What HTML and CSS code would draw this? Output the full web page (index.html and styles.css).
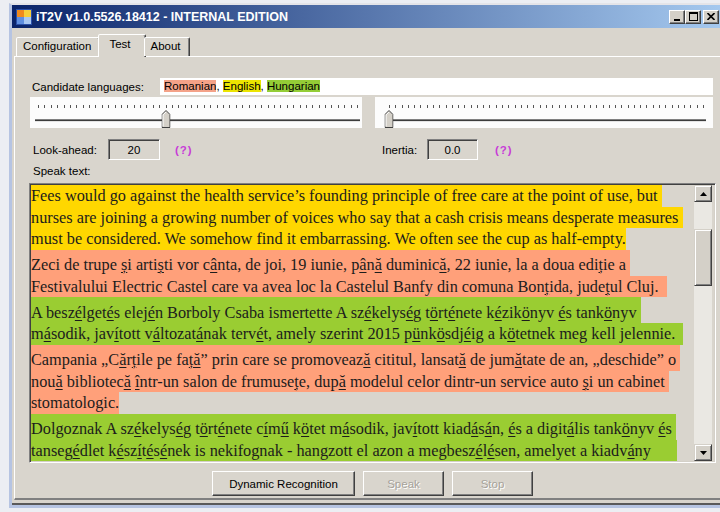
FILE: index.html
```html
<!DOCTYPE html>
<html lang="en">
<head>
<meta charset="utf-8">
<title>iT2V</title>
<link rel="stylesheet" href="styles.css">
</head>
<body>
<div class="window">
  <header class="titlebar">
    <svg class="app-icon" width="16" height="16" viewBox="0 0 16 16">
      <rect x="0" y="0" width="16" height="16" fill="#2a4fa8"/>
      <rect x="1" y="1" width="7" height="7" fill="#f08a1c"/>
      <rect x="8" y="1" width="7" height="7" fill="#f6cf3a"/>
      <rect x="1" y="8" width="7" height="7" fill="#5f8fe0"/>
      <rect x="8" y="8" width="7" height="7" fill="#a9c8f2"/>
    </svg>
    <span class="title">iT2V v1.0.5526.18412 - INTERNAL EDITION</span>
    <div class="caption-buttons">
      <span class="cbtn"><svg width="8" height="8" viewBox="0 0 8 8"><rect x="1" y="6" width="6" height="2" fill="#000"/></svg></span>
      <span class="cbtn"><svg width="9" height="9" viewBox="0 0 9 9"><rect x="0.5" y="0.5" width="8" height="8" fill="none" stroke="#000"/><rect x="0" y="0" width="9" height="2" fill="#000"/></svg></span>
      <span class="cbtn close"><svg width="8" height="7" viewBox="0 0 8 7"><path d="M0.5 0 L7.5 7 M7.5 0 L0.5 7" stroke="#000" stroke-width="1.6"/></svg></span>
    </div>
  </header>

  <div class="client">
    <nav class="tabs">
      <div class="tab">Configuration</div>
      <div class="tab active">Test</div>
      <div class="tab">About</div>
    </nav>

    <section class="panel">
      <div class="langs">
        <span class="lbl">Candidate languages:</span>
        <div class="lang-field"><span class="hl-ro">Romanian</span>, <span class="hl-en">English</span>, <span class="hl-hu">Hungarian</span></div>
      </div>

      <div class="sliders">
        <div class="trackbar look">
          <div class="scale">
            <div class="ticks"></div>
            <div class="channel"></div>
            <svg class="thumb" style="left: 40%" width="9" height="18" viewBox="0 0 9 18">
              <path d="M0.5 17.5 V4.5 L4.5 0.5 L8.5 4.5 V17.5 Z" fill="#d4d0c8" stroke="#404040"/>
              <path d="M1.5 16.5 V4.9 L4.5 1.9" fill="none" stroke="#fff"/>
            </svg>
          </div>
        </div>
        <div class="trackbar inert">
          <div class="scale">
            <div class="ticks"></div>
            <div class="channel"></div>
            <svg class="thumb" style="left: 0%" width="9" height="18" viewBox="0 0 9 18">
              <path d="M0.5 17.5 V4.5 L4.5 0.5 L8.5 4.5 V17.5 Z" fill="#d4d0c8" stroke="#404040"/>
              <path d="M1.5 16.5 V4.9 L4.5 1.9" fill="none" stroke="#fff"/>
            </svg>
          </div>
        </div>
      </div>

      <div class="params">
        <div class="param look">
          <span class="plabel">Look-ahead:</span>
          <span class="numbox">20</span>
          <span class="help">(?)</span>
        </div>
        <div class="param inert">
          <span class="plabel">Inertia:</span>
          <span class="numbox">0.0</span>
          <span class="help">(?)</span>
        </div>
      </div>

      <div class="speak-lbl">Speak text:</div>

      <div class="textbox">
        <div class="doc">
          <p class="para en">
            <span class="ln">Fees would go against the health service’s founding principle of free care at the point of use, but </span>
            <span class="ln">nurses are joining a growing number of voices who say that a cash crisis means desperate measures </span>
            <span class="ln">must be considered. We somehow find it embarrassing. We often see the cup as half-empty.</span>
          </p>
          <p class="para ro">
            <span class="ln">Zeci de trupe <u>ș</u>i arti<u>ș</u>ti vor c<u>â</u>nta, de joi, 19 iunie, p<u>â</u>n<u>ă</u> duminic<u>ă</u>, 22 iunie, la a doua edi<u>ț</u>ie a </span>
            <span class="ln tail">Festivalului Electric Castel care va avea loc la Castelul Banfy din comuna Bon<u>ț</u>ida, jude<u>ț</u>ul Cluj.</span>
          </p>
          <p class="para hu">
            <span class="ln">A besz<u>é</u>lget<u>é</u>s elej<u>é</u>n Borboly Csaba ismertette A sz<u>é</u>kelys<u>é</u>g t<u>ö</u>rt<u>é</u>nete k<u>é</u>zik<u>ö</u>nyv <u>é</u>s tank<u>ö</u>nyv </span>
            <span class="ln tail">m<u>á</u>sodik, jav<u>í</u>tott v<u>á</u>ltozat<u>á</u>nak terv<u>é</u>t, amely szerint 2015 p<u>ü</u>nk<u>ö</u>sdj<u>é</u>ig a k<u>ö</u>tetnek meg kell jelennie.</span>
          </p>
          <p class="para ro">
            <span class="ln">Campania „C<u>ă</u>r<u>ț</u>ile pe fa<u>ță</u>” prin care se promoveaz<u>ă</u> cititul, lansat<u>ă</u> de jum<u>ă</u>tate de an, „deschide” o </span>
            <span class="ln">nou<u>ă</u> bibliotec<u>ă</u> <u>î</u>ntr-un salon de frumuse<u>ț</u>e, dup<u>ă</u> modelul celor dintr-un service auto <u>ș</u>i un cabinet </span>
            <span class="ln">stomatologic.</span>
          </p>
          <p class="para hu">
            <span class="ln">Dolgoznak A sz<u>é</u>kelys<u>é</u>g t<u>ö</u>rt<u>é</u>nete c<u>í</u>m<u>ű</u> k<u>ö</u>tet m<u>á</u>sodik, jav<u>í</u>tott kiad<u>á</u>s<u>á</u>n, <u>é</u>s a digit<u>á</u>lis tank<u>ö</u>nyv <u>é</u>s </span>
            <span class="ln tail-wide">tanseg<u>é</u>dlet k<u>é</u>sz<u>í</u>t<u>é</u>s<u>é</u>nek is nekifognak - hangzott el azon a megbesz<u>é</u>l<u>é</u>sen, amelyet a kiadv<u>á</u>ny </span>
          </p>
        </div>
        <div class="vscroll">
          <div class="sb-btn"><svg width="7" height="4" viewBox="0 0 7 4"><path d="M0 4 L3.5 0 L7 4 Z" fill="#000"/></svg></div>
          <div class="sb-track"><div class="sb-thumb"></div></div>
          <div class="sb-btn"><svg width="7" height="4" viewBox="0 0 7 4"><path d="M0 0 L3.5 4 L7 0 Z" fill="#000"/></svg></div>
        </div>
      </div>

      <div class="actions">
        <button class="btn wide" type="button">Dynamic Recognition</button>
        <button class="btn" type="button" disabled>Speak</button>
        <button class="btn" type="button" disabled>Stop</button>
      </div>
    </section>
  </div>
</div>
</body>
</html>
```

FILE: styles.css
```css
* { box-sizing: border-box; }

html, body { margin: 0; padding: 0; }

body {
  width: 720px;
  height: 512px;
  overflow: hidden;
  background: #eceef3;
  font-family: "Liberation Sans", Arial, sans-serif;
  font-size: 11.5px;
  color: #000;
}

/* ---------- window frame ---------- */
.window {
  margin: 3px 0 0 9px;
  width: 718px;
  border-top: 2px solid #e4e4e8;
  border-left: 3px solid #b6c4e2;
  border-bottom: 3px solid #b6c4e2;
  background: #d9d5cd;
}

.titlebar {
  height: 23px;
  display: flex;
  align-items: center;
  background: linear-gradient(to right, #0a246a, #a6caf0);
  color: #fff;
}

.app-icon { flex: none; margin-left: 4px; }

.title {
  margin-left: 4px;
  font-weight: bold;
  font-size: 12.5px;
  white-space: nowrap;
}

.caption-buttons {
  margin-left: auto;
  margin-right: 8px;
  display: flex;
}

.cbtn {
  width: 16px;
  height: 14px;
  display: flex;
  align-items: center;
  justify-content: center;
  background: #d4d0c8;
  border: 1px solid;
  border-color: #fff #404040 #404040 #fff;
  box-shadow: inset -1px -1px #808080;
}

.cbtn.close { margin-left: 2px; }

/* ---------- client area ---------- */
.client {
  padding: 6px 0 3px 2px;
  border-bottom: 2px solid #5a5a5a;
}

.tabs {
  position: relative;
  z-index: 1;
  display: flex;
  align-items: flex-end;
  height: 22px;
  padding-left: 2px;
}

.tab {
  height: 19px;
  padding: 0 8px 0 6px;
  line-height: 17px;
  border: 1px solid;
  border-bottom: none;
  border-color: #fff #404040 transparent #fff;
  box-shadow: inset -1px 0 #808080;
  border-radius: 2px 2px 0 0;
  background: #d9d5cd;
  white-space: nowrap;
}

.tab.active {
  height: 23px;
  margin: 0 -2px -1px;
  padding: 0 14px 0 10px;
  line-height: 19px;
}

.panel {
  width: 713px;
  border-top: 1px solid #fff;
  border-left: 1px solid #fff;
  border-right: 1px solid #404040;
  border-bottom: 2px solid #808080;
  padding: 21px 10px 2px 14px;
}

/* candidate languages */
.langs {
  display: flex;
  align-items: center;
  height: 17px;
}

.lbl {
  flex: none;
  width: 128px;
  margin-left: 3px;
}

.lang-field {
  flex: 1;
  height: 17px;
  margin-right: 3px;
  padding-left: 4px;
  line-height: 17px;
  background: #fff;
  white-space: nowrap;
}

.hl-ro { background: #f4a288; }
.hl-en { background: #ece400; }
.hl-hu { background: #94cd36; }

/* trackbars */
.sliders {
  display: flex;
  gap: 13px;
  height: 31px;
  margin-top: 2px;
  padding-left: 1px;
}

.trackbar {
  display: flex;
  height: 31px;
  background: #fcfcfc;
}

.trackbar.look { width: 332px; }
.trackbar.inert { width: 338px; }

.scale {
  position: relative;
  flex: 1;
  display: flex;
  flex-direction: column;
}

.trackbar.look .scale { margin: 0 5px 0 8px; --step: 6.38px; }
.trackbar.inert .scale { margin: 0 10px 0 14px; --step: 6.28px; }

.ticks {
  height: 3px;
  margin-top: 8px;
  margin-right: -1px;
  background: repeating-linear-gradient(to right, #555 0 1px, transparent 1px var(--step));
}

.channel {
  height: 3px;
  margin: 11px -3px 0;
  border-top: 1px solid #808080;
  border-bottom: 1px solid #e4e4e4;
  background: #3c3c3c;
}

.thumb {
  position: absolute;
  top: 13px;
  transform: translateX(-50%);
}

/* numeric parameters */
.params {
  display: flex;
  height: 21px;
  margin-top: 11px;
}

.param {
  display: flex;
  align-items: center;
}

.param.look { width: 346px; padding-left: 4px; }
.param.inert { padding-left: 7px; }

.plabel { flex: none; }
.param.look .plabel { width: 75px; }
.param.inert .plabel { width: 45px; }

.numbox {
  height: 21px;
  display: flex;
  align-items: center;
  justify-content: center;
  border: 1px solid;
  border-color: #808080 #fff #fff #808080;
  box-shadow: inset 1px 1px #404040;
  background: #d9d5cd;
}

.param.look .numbox { width: 52px; }
.param.inert .numbox { width: 51px; }

.help {
  color: #c83cd8;
  font-weight: bold;
  letter-spacing: 1px;
}

.param.look .help { margin-left: 15px; }
.param.inert .help { margin-left: 17px; }

.speak-lbl {
  margin: 4px 0 0 4px;
  line-height: 14px;
}

/* speak text box */
.textbox {
  display: flex;
  height: 280px;
  margin-top: 5px;
  padding: 1px;
  border: 1px solid;
  border-color: #808080 #fff #fff #808080;
  box-shadow: inset 1px 1px #404040, inset -1px -1px #d4d0c8;
  background: #d9d5cd;
}

.doc {
  flex: 1;
  overflow: hidden;
  font-family: "Liberation Serif", "Times New Roman", serif;
  font-size: 16.3px;
  line-height: 21.5px;
  color: #1c1c1c;
}

.para { margin: 0; }

.ln {
  display: block;
  width: fit-content;
  white-space: pre;
}

.ln.tail { padding-right: 8px; }
.ln.tail-wide { padding-right: 22px; }

.para + .para .ln:first-child { padding-top: 4.5px; }

.para.en .ln { background: #ffd700; }
.para.ro .ln { background: #ffa07a; }
.para.hu .ln { background: #9acd32; }

u {
  text-decoration: underline;
  text-decoration-thickness: 1px;
  text-underline-offset: 2px;
}

.vscroll {
  flex: none;
  width: 18px;
  margin-right: 2px;
  display: flex;
  flex-direction: column;
  background: #eae8e3;
}

.sb-btn,
.sb-thumb {
  background: #d4d0c8;
  border: 1px solid;
  border-color: #d4d0c8 #404040 #404040 #d4d0c8;
  box-shadow: inset 1px 1px #fff, inset -1px -1px #808080;
}

.sb-btn {
  flex: none;
  height: 17px;
  display: flex;
  align-items: center;
  justify-content: center;
}

.sb-track {
  flex: 1;
  padding-top: 27px;
}

.sb-thumb { height: 57px; }

/* buttons */
.actions {
  display: flex;
  justify-content: center;
  gap: 8px;
  margin-top: 8px;
}

.btn {
  width: 81px;
  height: 25px;
  padding: 0;
  font: inherit;
  color: #000;
  background: #d9d5cd;
  border: 1px solid;
  border-color: #fff #404040 #404040 #fff;
  box-shadow: inset -1px -1px #808080;
  border-radius: 0;
}

.btn.wide { width: 143px; }

.btn:disabled {
  color: #a6a29a;
  text-shadow: 1px 1px #fff;
}
```
